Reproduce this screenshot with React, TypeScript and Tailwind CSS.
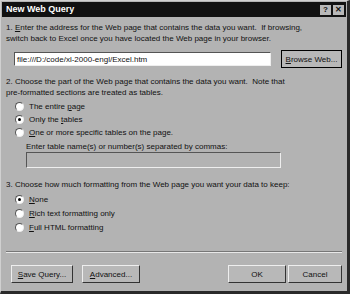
import React from "react";

const Radio = ({ checked, label, h }: { checked?: boolean; label: React.ReactNode; h?: string }) => (
  <div className={`flex items-center gap-[5px] ${h ?? "h-[13px]"}`}>
    <div className="relative w-[9px] h-[9px] rounded-full bg-white border border-t-[#555] border-l-[#555] border-r-[#eee] border-b-[#eee] flex items-center justify-center">
      {checked && <div className="w-[3px] h-[3px] rounded-full bg-black" />}
    </div>
    <span>{label}</span>
  </div>
);

const Btn = ({ children, w, def }: { children: React.ReactNode; w: string; def?: boolean }) => (
  <div className={`${w} h-[18px] flex items-center justify-center bg-[#b8b8b8] border ${def ? "border-black" : "border-t-[#eee] border-l-[#eee] border-r-[#333] border-b-[#333]"}`}>
    {children}
  </div>
);

export default function App() {
  return (
    <div className="w-[350px] h-[294px] bg-[#b3b3b3] border-r-[3px] border-b-[3px] border-[#2a2a2a] border-l border-t border-l-[#d0d0d0] border-t-[#d0d0d0] text-[8px] leading-[11px] text-[#111] flex flex-col" style={{ fontFamily: '"Liberation Sans", Arial, sans-serif' }}>
      <div className="mx-[1px] mt-[1px] h-[15px] bg-[#111] flex items-center justify-between pl-[4px] pr-[2px]">
        <span className="text-white font-bold text-[9px]">New Web Query</span>
        <div className="flex gap-[2px]">
          <div className="w-[11px] h-[10px] bg-[#b8b8b8] flex items-center justify-center text-[8px] font-bold leading-none">?</div>
          <div className="w-[11px] h-[10px] bg-[#b8b8b8] flex items-center justify-center text-[8px] font-bold leading-none">✕</div>
        </div>
      </div>
      <div className="px-[5px] pt-[5px] flex flex-col">
        <div>
          1. <u>E</u>nter the address for the Web page that contains the data you want.&nbsp; If browsing,<br />
          switch back to Excel once you have located the Web page in your browser.
        </div>
        <div className="flex items-center mt-[6px] ml-[8px]">
          <div className="w-[258px] h-[14px] bg-white border border-t-[#555] border-l-[#555] border-r-[#eee] border-b-[#eee] flex items-center pl-[2px]">file:///D:/code/xl-2000-engl/Excel.htm</div>
          <div className="ml-[10px]">
            <Btn w="w-[61px]" def><span><u>B</u>rowse Web...</span></Btn>
          </div>
        </div>
        <div className="mt-[8px]">
          2. Choose the part of the Web page that contains the data you want.&nbsp; Note that<br />
          pre-formatted sections are treated as tables.
        </div>
        <div className="ml-[9px] mt-[2px] flex flex-col">
          <Radio label={<>The entire <u>p</u>age</>} />
          <Radio checked label={<>Only the <u>t</u>ables</>} />
          <Radio label={<><u>O</u>ne or more specific tables on the page.</>} />
        </div>
        <div className="ml-[20px] mt-[2px]">Enter table name(s) or number(s) separated by commas:</div>
        <div className="ml-[20px] mt-[0px] w-[255px] h-[16px] border border-t-[#555] border-l-[#555] border-r-[#eee] border-b-[#eee]" />
        <div className="mt-[11px]">3. Choose how much formatting from the Web page you want your data to keep:</div>
        <div className="ml-[9px] mt-[2px] flex flex-col">
          <Radio h="h-[14px]" checked label={<><u>N</u>one</>} />
          <Radio h="h-[14px]" label={<><u>R</u>ich text formatting only</>} />
          <Radio h="h-[14px]" label={<><u>F</u>ull HTML formatting</>} />
        </div>
        <div className="mt-[17px] h-[2px] border-t border-t-[#777] border-b border-b-[#e8e8e8]" />
        <div className="mt-[12px] flex items-center ml-[5px]">
          <Btn w="w-[62px]"><span><u>S</u>ave Query...</span></Btn>
          <div className="ml-[9px]"><Btn w="w-[58px]"><span><u>A</u>dvanced...</span></Btn></div>
          <div className="ml-auto flex gap-[2px]">
            <Btn w="w-[58px]">OK</Btn>
            <Btn w="w-[54px]">Cancel</Btn>
          </div>
        </div>
      </div>
    </div>
  );
}
